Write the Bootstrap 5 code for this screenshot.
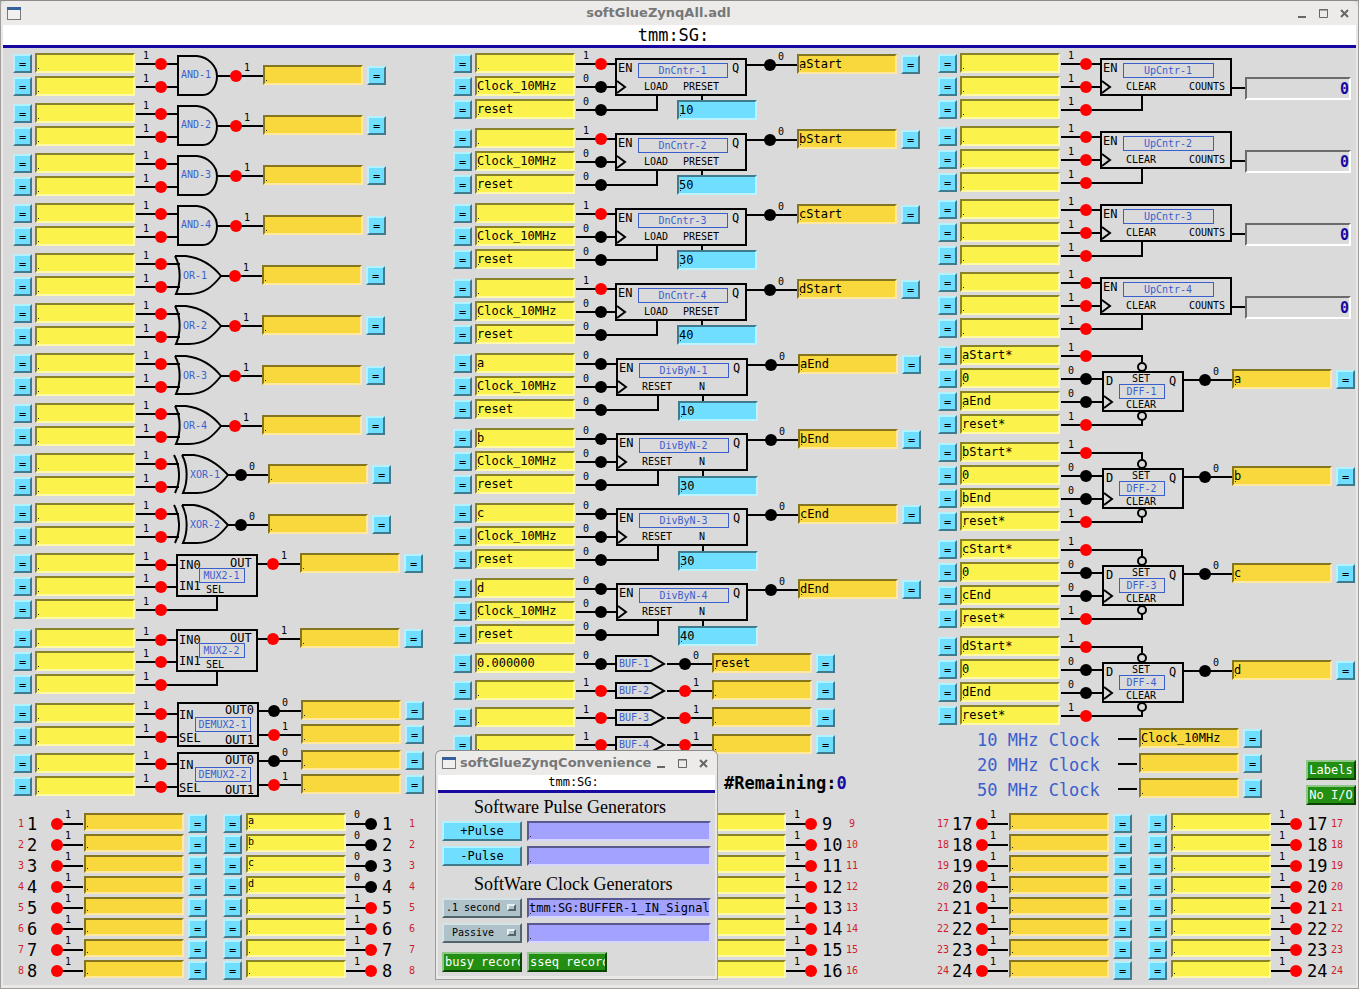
<!DOCTYPE html>
<html lang="en">
<head>
<meta charset="utf-8">
<meta name="viewport" content="width=device-width, initial-scale=1">
<title>softGlueZynqAll.adl</title>
<link href="https://cdn.jsdelivr.net/npm/bootstrap@5.3.0/dist/css/bootstrap.min.css" rel="stylesheet">
<style>
  body { background: #dadada; color: #000; font: 12px/16px "DejaVu Sans Mono", monospace; }
  .frame { border: 1px solid #a09d9a; border-top-color: #8d8b89; background: #dadada; }
  .screen { border: solid #e9e8e7; border-width: 0 2px 3px; }
  .titlebar { height: 24px; background: #ecebea; color: #777; padding: 0 3px 0 6px; border-radius: 6px 6px 0 0; }
  .titlebar h1 { font: bold 13px/20px "DejaVu Sans", sans-serif; padding-left: 4px; }
  .titlebar button { width: 21px; height: 20px; padding: 0; border: 0; background: none; color: #666; line-height: 0; }
  .prefix { background: #fff; border-bottom: 3px solid #1608a0; }
  .prefix-lg { height: 23px; font-size: 17px; line-height: 20px; padding-right: 12px; }
  .prefix-sm { height: 18px; line-height: 15px; padding-right: 6px; }

  .columns { display: grid; grid-template-columns: 440fr 485fr 428fr; }
  .lane { padding: 5px 0 0 10px; }
  .lane-gap { gap: 7px; }
  .rows { display: flex; flex-direction: column; gap: 3px; }
  .rows-wide { gap: 4px; }
  .gate svg { display: block; overflow: visible; flex: none; }
  .tall { height: 68px; }
  .counter { height: 68px; }
  .upcounter { height: 66px; }
  .flipflop { height: 90px; }

  .key { --bs-btn-padding-x: 0; --bs-btn-padding-y: 0; width: 19px; height: 19px; flex: none;
    font: 12px/14px "DejaVu Sans Mono", monospace; background: #70dfff; color: #000;
    border: 2px solid; border-color: #b5f2ff #3f7b8c #3f7b8c #b5f2ff; border-radius: 0; }
  .pad3 { gap: 3px; }
  .pad4 { gap: 4px; }
  .slot { width: 100px; height: 20px; padding: 0; border: 2px solid; border-radius: 0; outline: 0;
    font: inherit; line-height: 16px; color: #000; flex: none;
    background-image: linear-gradient(#222, #222); background-size: 1px 1px; background-repeat: no-repeat; background-position: 1px 13px; }
  .slot-in { background-color: #fbf24b; border-color: #88822a #fffaa8 #fffaa8 #88822a; }
  .slot-out { background-color: #f8d83c; border-color: #86751f #ffe9a0 #ffe9a0 #86751f; }
  .slot-num { background-color: #70dfff; border-color: #3f7b8c #bdf3ff #bdf3ff #3f7b8c; width: 80px; }
  .slot-mem { background-color: #a3a3ff; border-color: #595990 #d5d5ff #d5d5ff #595990; width: auto; }
  .num-dn { margin-left: 102px; }
  .num-div { margin-left: 103px; }
  .drop-1 { margin-top: 1px; }
  .drop-11 { margin-top: 11px; }
  .drop-12 { margin-top: 12px; }
  .drop-24 { margin-top: 24px; }
  .lift-3 { margin-top: -3px; }
  .counts { width: 106px; height: 23px; border: 2px solid; border-color: #6b6b6b #fff #fff #6b6b6b;
    font: bold 15px/21px "DejaVu Sans Mono", monospace; color: #1608a0; text-align: right; }

  .wire { stroke: #000; stroke-width: 2; fill: none; }
  .body-line { stroke: #000; stroke-width: 2; fill: none; }
  .on { fill: #f00; }
  .off { fill: #000; }
  .tiny { font-size: 10px; }
  .plain { font-size: 12px; }
  .blue { fill: #3a5fcd; font-size: 10px; }
  .tag { fill: none; stroke: #3a5fcd; stroke-width: 1; shape-rendering: crispEdges; }

  .remaining { margin: 11px 0 0 271px; font: bold 17px/22px "DejaVu Sans Mono", monospace; }
  .navy { color: #1608a0; }
  .clocks { margin-top: -6px; padding: 1px 0 0 39px; }
  .clock-row { height: 20px; }
  .clock-name { width: 141px; font-size: 17px; line-height: 24px; color: #3a5fcd; }
  .clock-rows { display: flex; flex-direction: column; gap: 5px; }
  .green { --bs-btn-padding-x: 1px; --bs-btn-padding-y: 0; width: 50px; height: 20px; border: 2px solid;
    border-color: #8fc786 #0b4504 #0b4504 #8fc786; border-radius: 0; background: #228f12; color: #fff;
    font: 12px/16px "DejaVu Sans Mono", monospace; overflow: hidden; white-space: nowrap; }
  .side-keys { padding-top: 32px; gap: 5px; }

  .bank { padding: 8px 0 4px 9px; display: flex; flex-direction: column; gap: 1px; }
  .bank-row { height: 20px; }
  .bank-row svg { overflow: visible; flex: none; }
  .bank-row .slot { height: 18px; font-size: 10px; line-height: 10px; padding-bottom: 4px; background-position: 1px 11px; }
  .bank-row .key { margin-top: 1px; }
  .bank-row .key + .key { margin-left: 12px; }
  .red-no { width: 12px; font-size: 10px; line-height: 22px; color: #d01c2c; flex: none; text-align: right; }
  .big-no { width: 20px; font-size: 17px; line-height: 23px; flex: none; margin-left: 3px; }
  .big-no-end { width: 24px; font-size: 17px; line-height: 23px; flex: none; }

  .popup { position: absolute; left: 434px; top: 749px; width: 283px; z-index: 5; border-radius: 6px 6px 0 0; }
  .popup-body { padding: 4px 4px 4px 4px; }
  .popup h2 { font: 18px/20px "Liberation Serif", serif; margin: 0 0 4px 32px; white-space: nowrap; }
  .popup h2.second { margin-top: 8px; }
  .tools { display: grid; grid-template-columns: 80px 1fr; gap: 5px; }
  .tools-end { grid-template-columns: 80px 80px; margin-top: 9px; }
  .wide { width: 80px; height: 20px; }
  .menu-box { position: relative; }
  .menu-box select { appearance: none; width: 80px; height: 20px; padding: 0 20px 0 2px; border: 2px solid; border-radius: 0;
    border-color: #d3e3e8 #53656c #53656c #d3e3e8; background: #afc2ca; color: #000; font: 10px/14px "DejaVu Sans Mono", monospace; text-align: center; }
  .knob { position: absolute; right: 6px; top: 6px; width: 9px; height: 7px; border: 2px solid; border-color: #e6f1f4 #53656c #53656c #e6f1f4; background: #afc2ca; pointer-events: none; }
</style>
</head>
<body>
<div class="frame min-vh-100 d-flex flex-column position-relative">
  <header class="titlebar d-flex align-items-center">
    <svg width="14" height="13" aria-hidden="true"><rect x=".5" y=".5" width="13" height="12" fill="#f1f0ee" stroke="#777b80"/><path d="M0 1.500H14" stroke="#35609c" stroke-width="3"/></svg>
    <h1 class="flex-grow-1 text-center m-0">softGlueZynqAll.adl</h1>
    <button type="button" aria-label="Minimize"><svg width="11" height="11"><path d="M1 9H9" stroke="currentColor" stroke-width="2"/></svg></button>
    <button type="button" aria-label="Maximize"><svg width="11" height="11"><path d="M1.500 1.500H9.500V9.500H1.500ZM1 2H10" fill="none" stroke="currentColor"/></svg></button>
    <button type="button" aria-label="Close"><svg width="11" height="11"><path d="M2 2L9 9M9 2L2 9" stroke="currentColor" stroke-width="2"/></svg></button>
  </header>
  <div class="screen flex-grow-1">
    <div class="prefix prefix-lg text-center">tmm:SG:</div>
    <main>
      <div class="columns">
        <section class="lane lane-gap d-flex flex-column" id="gates"></section>
        <section class="lane lane-gap d-flex flex-column" id="counters"></section>
        <section class="lane lane-gap d-flex flex-column" id="flipflops"></section>
      </div>
      <div class="columns" id="banks"></div>
    </main>
  </div>

  <aside class="frame popup">
    <header class="titlebar d-flex align-items-center">
      <svg width="14" height="12" aria-hidden="true"><rect x=".5" y=".5" width="13" height="11" fill="#f1f0ee" stroke="#777b80"/><path d="M0 1.500H14" stroke="#35609c" stroke-width="3"/></svg>
      <h1 class="flex-grow-1 text-center m-0">softGlueZynqConvenience</h1>
      <button type="button" aria-label="Minimize"><svg width="11" height="11"><path d="M1 9H9" stroke="currentColor" stroke-width="2"/></svg></button>
      <button type="button" aria-label="Maximize"><svg width="11" height="11"><path d="M1.500 1.500H9.500V9.500H1.500ZM1 2H10" fill="none" stroke="currentColor"/></svg></button>
      <button type="button" aria-label="Close"><svg width="11" height="11"><path d="M2 2L9 9M9 2L2 9" stroke="currentColor" stroke-width="2"/></svg></button>
    </header>
    <div class="screen">
      <div class="prefix prefix-sm text-center">tmm:SG:</div>
      <div class="popup-body">
        <h2>Software Pulse Generators</h2>
        <div class="tools">
          <button type="button" class="btn key wide">+Pulse</button><input class="slot slot-mem" aria-label="Positive pulse target">
          <button type="button" class="btn key wide">-Pulse</button><input class="slot slot-mem" aria-label="Negative pulse target">
        </div>
        <h2 class="second">SoftWare Clock Generators</h2>
        <div class="tools">
          <div class="menu-box"><select aria-label="First clock rate"><option>.1 second</option><option>Passive</option></select><span class="knob"></span></div>
          <input class="slot slot-mem" aria-label="First clock target" value="tmm:SG:BUFFER-1_IN_Signal">
          <div class="menu-box"><select aria-label="Second clock rate"><option>Passive</option><option>.1 second</option></select><span class="knob"></span></div>
          <input class="slot slot-mem" aria-label="Second clock target">
        </div>
        <div class="tools tools-end">
          <button type="button" class="btn green wide text-start">busy record</button>
          <button type="button" class="btn green wide text-start">sseq record</button>
        </div>
      </div>
    </div>
  </aside>
</div>

<script src="https://cdn.jsdelivr.net/npm/bootstrap@5.3.0/dist/js/bootstrap.bundle.min.js"></script>
<script>
  const key = '<button type="button" class="btn key">=</button>';
  const slot = (kind, value, label) => `<input class="slot slot-${kind}" value="${value}" aria-label="${label}">`;
  const text = (x, y, cls, s) => `<text x="${x}" y="${y}" class="${cls}">${s}</text>`;

  // One signal line: the wire, its state lamp and the state digit above it
  const lamp = (x, y, v) => `<circle cx="${x}" cy="${y}" r="6" class="${v ? 'on' : 'off'}"/>`;
  const lineIn = (y, v, end) => `<path class="wire" d="M1 ${y}H${end}"/>${lamp(26, y, v)}${text(8, y - 5, 'tiny', v)}`;
  const lineOut = (start, y, v, dot, end) => `<path class="wire" d="M${start} ${y}H${end}"/>${lamp(dot, y, v)}${text(dot + 8, y - 5, 'tiny', v)}`;
  const tag = (x, y, w, s) => `<rect class="tag" x="${x}" y="${y}" width="${w}" height="14"/><text x="${x + w / 2}" y="${y + 11}" text-anchor="middle" class="blue">${s}</text>`;
  const box = (x, y, w, h) => `<rect class="body-line" x="${x}" y="${y}" width="${w}" height="${h}"/>`;
  const shape = d => `<path class="body-line" d="${d}"/>`;
  const svg = (w, h, inner) => `<svg width="${w}" height="${h}">${inner}</svg>`;

  function gate({ name, ins, art, outs = [], drop = '', size = '', gap = '' }) {
    const left = ins.map((v, i) => `<div class="d-flex align-items-end pad3">${key}${slot('in', v, name + ' input ' + (i + 1))}</div>`).join('');
    const right = outs.map((v, i) => `<div class="d-flex align-items-end pad4">${slot('out', v, name + ' output ' + (i + 1))}${key}</div>`).join('');
    return `<div class="gate d-flex align-items-start ${size}"><div class="rows">${left}</div><div>${art}</div>` +
      (right ? `<div class="rows ${gap} ${drop}">${right}</div>` : '') + '</div>';
  }

  // Logic gates, multiplexers and demultiplexers
  let html = '';
  for (let n = 1; n <= 4; n++) html += gate({ name: 'AND-' + n, ins: ['', ''], outs: [''], drop: 'drop-12',
    art: svg(128, 43, lineIn(11, 1, 43) + lineIn(34, 1, 43) + shape('M43 3H62C73 4 82 13 82 23S76 42 68 42H43Z') +
      lineOut(82, 23, 1, 101, 128) + text(46, 25, 'blue', 'AND-' + n)) });
  for (let n = 1; n <= 4; n++) html += gate({ name: 'OR-' + n, ins: ['', ''], outs: [''], drop: 'drop-12',
    art: svg(127, 43, lineIn(11, 1, 45) + lineIn(34, 1, 45) + shape('M40 3H51C66 5 78 13 86 23C78 33 70 41 54 41H41C46 30 46 14 40 3') +
      lineOut(86, 23, 1, 100, 127) + text(48, 26, 'blue', 'OR-' + n)) });
  for (let n = 1; n <= 2; n++) html += gate({ name: 'XOR-' + n, ins: ['', ''], outs: [''], drop: 'drop-11',
    art: svg(133, 43, lineIn(11, 1, 44) + lineIn(34, 1, 44) + shape('M39 2C45 13 46 28 40 40M47 2H59C73 4 84 12 93 22C85 32 77 40 62 40H48C53 29 53 13 47 2') +
      lineOut(93, 22, 0, 106, 133) + text(55, 25, 'blue', 'XOR-' + n)) });
  for (let n = 1; n <= 2; n++) html += gate({ name: 'MUX2-' + n, ins: ['', '', ''], outs: [''], size: 'tall',
    art: svg(165, 66, lineIn(12, 1, 42) + lineIn(34, 1, 42) + lineIn(57, 1, 83) + shape('M82 58V43') + box(42, 2, 80, 41) +
      text(44, 16, 'plain', 'IN0') + text(44, 37, 'plain', 'IN1') + text(95, 14, 'plain', 'OUT') + text(71, 40, 'tiny', 'SEL') +
      tag(64, 15, 45, 'MUX2-' + n) + lineOut(122, 11, 1, 138, 165)) });
  for (let n = 1; n <= 2; n++) html += gate({ name: 'DEMUX2-' + n, ins: ['', ''], outs: ['', ''], drop: 'lift-3', gap: 'rows-wide',
    art: svg(166, 43, lineIn(11, 1, 43) + lineIn(34, 1, 43) + box(43, 0, 80, 43) +
      text(44, 16, 'plain', 'IN') + text(44, 39, 'plain', 'SEL') + text(90, 11, 'plain', 'OUT0') + text(90, 41, 'plain', 'OUT1') +
      tag(60, 14, 55, 'DEMUX2-' + n) + lineOut(123, 8, 0, 139, 166) + lineOut(123, 32, 1, 139, 166)) });
  document.getElementById('gates').innerHTML = html;

  // Down counters, dividers and buffers
  html = '';
  const presets = [10, 50, 30, 40], divisors = [10, 30, 30, 40], names = ['a', 'b', 'c', 'd'];
  const arrow = shape('M42 28L50 34L42 40');
  for (let n = 1; n <= 4; n++) html += gate({ name: 'DnCntr-' + n, ins: ['', 'Clock_10MHz', 'reset'], outs: [names[n - 1] + 'Start'], drop: 'drop-1', size: 'counter',
    art: svg(222, 47, lineIn(11, 1, 41) + lineIn(34, 0, 41) + lineIn(57, 0, 83) + shape('M82 58V42M127 42V47') + box(41, 6, 130, 36) + arrow +
      text(43, 19, 'plain', 'EN') + text(157, 19, 'plain', 'Q') + text(69, 37, 'tiny', 'LOAD') + text(108, 37, 'tiny', 'PRESET') +
      tag(63, 10, 89, 'DnCntr-' + n) + lineOut(171, 12, 0, 195, 222)) +
      `<div class="num-dn">${slot('num', presets[n - 1], 'DnCntr-' + n + ' preset')}</div>` });
  for (let n = 1; n <= 4; n++) html += gate({ name: 'DivByN-' + n, ins: [names[n - 1], 'Clock_10MHz', 'reset'], outs: [names[n - 1] + 'End'], drop: 'drop-1', size: 'counter',
    art: svg(223, 48, lineIn(11, 0, 42) + lineIn(34, 0, 42) + lineIn(57, 0, 84) + shape('M83 58V42M128 42V48') + box(42, 6, 130, 36) + shape('M43 28L51 34L43 40') +
      text(44, 19, 'plain', 'EN') + text(158, 19, 'plain', 'Q') + text(67, 37, 'tiny', 'RESET') + text(124, 37, 'tiny', 'N') +
      tag(64, 10, 89, 'DivByN-' + n) + lineOut(172, 12, 0, 196, 223)) +
      `<div class="num-div">${slot('num', divisors[n - 1], 'DivByN-' + n + ' divisor')}</div>` });
  for (let n = 1; n <= 4; n++) { const v = n > 1 ? 1 : 0; html += gate({ name: 'BUF-' + n, ins: [v ? '' : '0.000000'], outs: [v ? '' : 'reset'],
    art: svg(137, 20, lineIn(11, v, 41) + shape('M41 3H76L89 11L76 18H41Z') + text(44, 14, 'blue', 'BUF-' + n) + lineOut(92, 11, v, 110, 137)) }); }
  html += '<div class="remaining">#Remaining:<span class="navy">0</span></div>';
  document.getElementById('counters').innerHTML = html;

  // Up counters, flip-flops and clock outputs
  html = '';
  for (let n = 1; n <= 4; n++) html += gate({ name: 'UpCntr-' + n, ins: ['', '', ''], size: 'upcounter',
    art: '<div class="d-flex">' + svg(185, 47, lineIn(11, 1, 41) + lineIn(34, 1, 41) + lineIn(57, 1, 83) + shape('M82 58V42') + box(41, 6, 130, 36) + arrow +
      text(43, 19, 'plain', 'EN') + text(66, 37, 'tiny', 'CLEAR') + text(129, 37, 'tiny', 'COUNTS') +
      tag(63, 10, 90, 'UpCntr-' + n) + shape('M171 35H185')) + '<output class="counts drop-24">0</output></div>' });
  for (let n = 1; n <= 4; n++) { const s = names[n - 1]; html += gate({ name: 'DFF-' + n, ins: [s + 'Start*', '0', s + 'End', 'reset*'], outs: [s], drop: 'drop-24', size: 'flipflop',
    art: svg(172, 89, lineIn(11, 1, 83) + lineIn(34, 0, 43) + lineIn(57, 0, 43) + lineIn(80, 1, 83) + shape('M82 11V18M82 80V75') +
      '<circle class="body-line" cx="82" cy="22" r="4"/><circle class="body-line" cx="82" cy="71" r="4"/>' + box(43, 27, 80, 39) + shape('M44 51L52 57L44 63') +
      text(46, 40, 'plain', 'D') + text(109, 40, 'plain', 'Q') + text(72, 37, 'tiny', 'SET') + text(66, 63, 'tiny', 'CLEAR') +
      tag(59, 39, 45, 'DFF-' + n) + lineOut(123, 35, 0, 145, 172)) }); }
  // Last lane item: clock names, their outputs and the two related-display keys
  html += '<div class="clocks d-flex align-items-start justify-content-between"><div class="clock-rows">' + [10, 20, 50].map(f =>
    `<div class="clock-row d-flex"><span class="clock-name">${f} MHz Clock</span>${svg(21, 20, '<path class="wire" d="M0 11H19"/>')}` +
    `<div class="d-flex align-items-end pad4">${slot('out', f === 10 ? 'Clock_10MHz' : '', f + ' MHz clock output')}${key}</div></div>`).join('') +
    '</div><div class="side-keys d-flex flex-column"><button type="button" class="btn green">Labels</button><button type="button" class="btn green">No I/O</button></div></div>';
  document.getElementById('flipflops').innerHTML = html;

  // Field I/O banks, eight lines each
  html = '';
  for (let b = 0; b < 3; b++) {
    html += '<section class="bank">';
    for (let i = 1; i <= 8; i++) {
      const n = b * 8 + i, v = n > 4 ? 1 : 0;
      html += `<div class="bank-row d-flex align-items-start"><span class="red-no">${n}</span><span class="big-no">${n}</span>` +
        svg(37, 20, '<path class="wire" d="M10 11H36"/>' + lamp(10, 11, 1) + text(18, 5, 'tiny', 1)) +
        `<div class="d-flex pad4 align-items-start">${slot('out', '', 'Field input ' + n)}${key}${key}</div>` +
        `<div class="d-flex ps-1">${slot('in', v ? '' : names[n - 1], 'Field output ' + n)}</div>` +
        svg(36, 20, '<path class="wire" d="M0 11H25"/>' + lamp(25, 11, v) + text(8, 5, 'tiny', v)) +
        `<span class="big-no-end">${n}</span><span class="red-no text-center">${n}</span></div>`;
    }
    html += '</section>';
  }
  document.getElementById('banks').innerHTML = html;
</script>
</body>
</html>
